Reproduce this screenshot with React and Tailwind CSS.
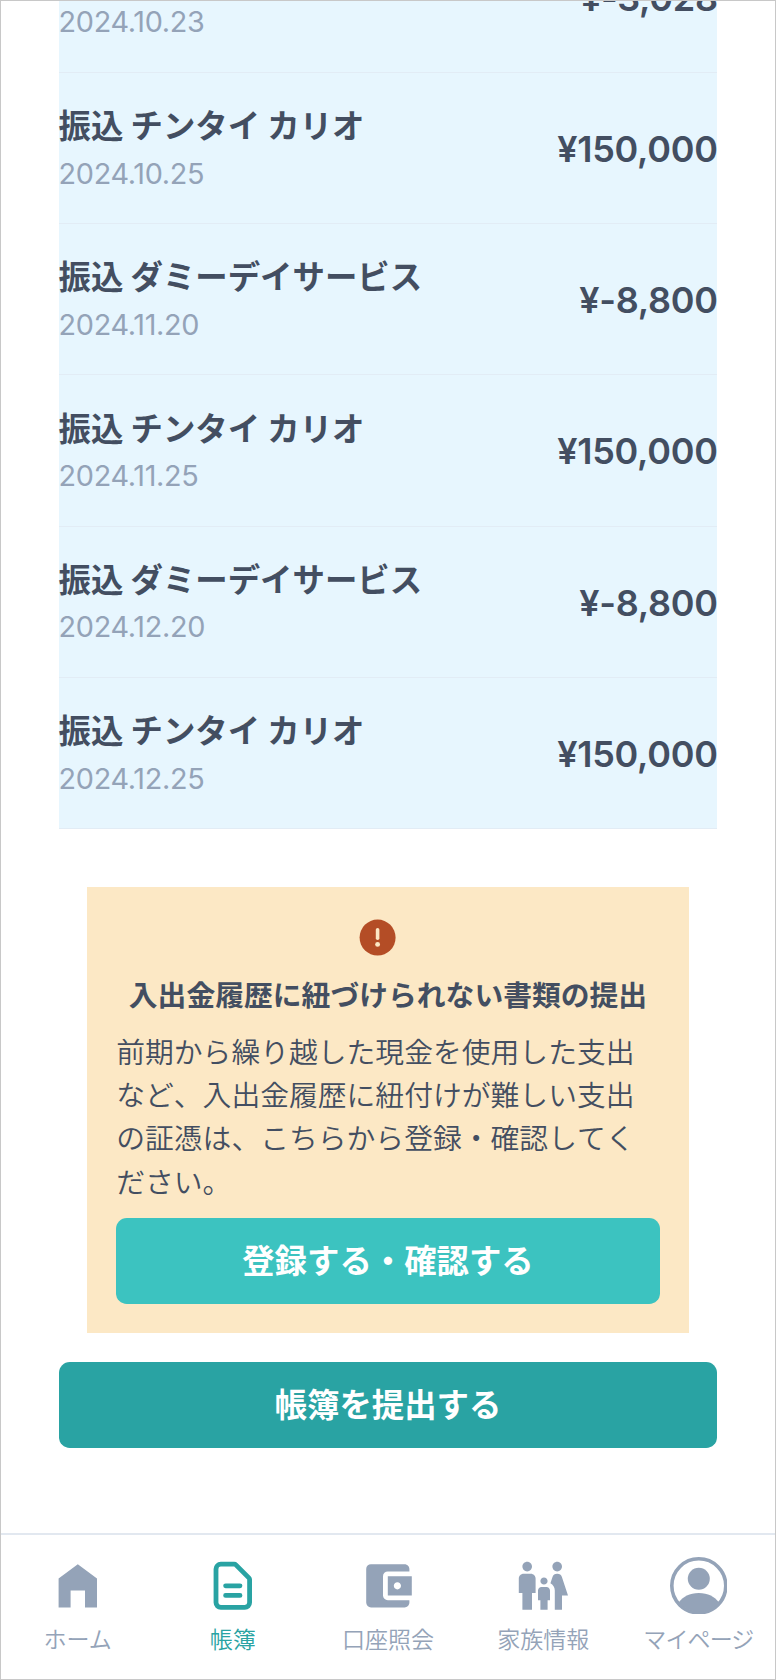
import { MdFamilyRestroom, MdAccountBalanceWallet } from "react-icons/md";

const rows = [
  { name: "振込 ダミーデイサービス", date: "2024.10.23", amount: "¥-3,028" },
  { name: "振込 チンタイ カリオ", date: "2024.10.25", amount: "¥150,000" },
  { name: "振込 ダミーデイサービス", date: "2024.11.20", amount: "¥-8,800" },
  { name: "振込 チンタイ カリオ", date: "2024.11.25", amount: "¥150,000" },
  { name: "振込 ダミーデイサービス", date: "2024.12.20", amount: "¥-8,800" },
  { name: "振込 チンタイ カリオ", date: "2024.12.25", amount: "¥150,000" },
];

const icon = "size-[57.6px]";

function HomeIcon() {
  return (
    <svg viewBox="0 0 24 24" className={icon} fill="currentColor">
      <path d="M4 21V9l8-6 8 6v12h-5v-7H9v7z" />
    </svg>
  );
}

function LedgerIcon() {
  return (
    <svg viewBox="0 0 24 24" className={icon} fill="none" stroke="currentColor" strokeWidth="2" strokeLinecap="round" strokeLinejoin="round">
      <path d="M9 12h6m-6 4h6m2 5H7a2 2 0 0 1-2-2V5a2 2 0 0 1 2-2h5.586a1 1 0 0 1 .707.293l5.414 5.414a1 1 0 0 1 .293.707V19a2 2 0 0 1-2 2z" />
    </svg>
  );
}

function ProfileIcon() {
  return (
    <svg viewBox="0 0 57.6 57.6" className={icon} fill="currentColor">
      <circle cx="28.8" cy="28.8" r="27" fill="none" stroke="currentColor" strokeWidth="3.6" />
      <circle cx="28.8" cy="21.7" r="11" />
      <path d="M8.6 45.6C13 39.5 19.5 36 28.8 36s15.8 3.5 20.2 9.6A27 27 0 0 1 8.6 45.6z" />
    </svg>
  );
}

function AlertIcon() {
  return (
    <svg viewBox="0 0 24 24" className="mr-[21.6px] size-[43.2px]">
      <circle cx="12" cy="12" r="10" fill="#b44d26" />
      <rect x="11" y="6.6" width="2" height="6.7" rx="1" fill="#fce8c5" />
      <circle cx="12" cy="15.8" r="1.35" fill="#fce8c5" />
    </svg>
  );
}

const tabs = [
  { label: "ホーム", icon: <HomeIcon /> },
  { label: "帳簿", icon: <LedgerIcon />, active: true },
  { label: "口座照会", icon: <MdAccountBalanceWallet className={icon} /> },
  { label: "家族情報", icon: <MdFamilyRestroom className={icon} /> },
  { label: "マイページ", icon: <ProfileIcon />, tight: true },
];

export default function App() {
  return (
    <div className="flex h-[1680px] w-[776px] flex-col overflow-hidden border border-[#c8c8c8] bg-white font-['Inter','Noto_Sans_CJK_JP',sans-serif] text-[28.8px] leading-[43.2px] text-[#434e61]">
      <main className="flex min-h-0 flex-1 flex-col justify-end overflow-hidden px-[57.6px] pb-[84.6px]">
        <ul className="shrink-0">
          {rows.map((row) => (
            <li key={row.date} className="flex h-[151.3px] items-center justify-between border-b-[1.8px] border-[#e2ecf5] bg-[#e7f6fe] pt-[1.8px]">
              <div>
                <p className="text-[32.4px] leading-[48.6px] font-bold [font-kerning:none] [word-spacing:-0.5px]">{row.name}</p>
                <p className="tracking-[-0.32px] text-[#94a3b8]">{row.date}</p>
              </div>
              <p className="-mr-[0.3px] text-[36px] leading-[54px] font-semibold tracking-[-0.27px]">{row.amount}</p>
            </li>
          ))}
        </ul>
        <section className="mx-[28.8px] mt-[57.6px] flex shrink-0 flex-col items-center bg-[#fce8c5] p-[28.8px]">
          <AlertIcon />
          <h2 className="mt-[15.4px] -mb-px font-bold whitespace-nowrap">入出金履歴に紐づけられない書類の提出</h2>
          <p className="mt-[14.4px] w-full font-[350] [font-kerning:none]">
            前期から繰り越した現金を使用した支出
            <br />
            など、入出金履歴に紐付けが難しい支出
            <br />
            の証憑は、こちらから登録・確認してく
            <br />
            ださい。
          </p>
          <button className="mt-[14.4px] h-[86.4px] w-full rounded-[10.8px] bg-[#3cc3c0] text-[32.4px] font-bold text-white">
            登録する・確認する
          </button>
        </section>
        <button className="mt-[28.8px] h-[86.4px] w-full shrink-0 rounded-[10.8px] bg-[#29a3a3] text-[32.4px] font-bold text-white">
          帳簿を提出する
        </button>
      </main>
      <nav className="-mx-px grid shrink-0 grid-cols-5 border-t-2 border-[#e2e8f0] pt-[21.6px] pb-[21.6px]">
        {tabs.map((tab) => (
          <a key={tab.label} className={tab.active ? "flex flex-col items-center gap-[8.6px] text-[#29a3a3]" : "flex flex-col items-center gap-[8.6px] text-[#94a3b8]"}>
            {tab.icon}
            <span className={tab.tight ? "text-[23.04px] leading-[34.56px] font-[350] tracking-[-0.9px] whitespace-nowrap" : "text-[23.04px] leading-[34.56px] font-[350] whitespace-nowrap"}>{tab.label}</span>
          </a>
        ))}
      </nav>
    </div>
  );
}
